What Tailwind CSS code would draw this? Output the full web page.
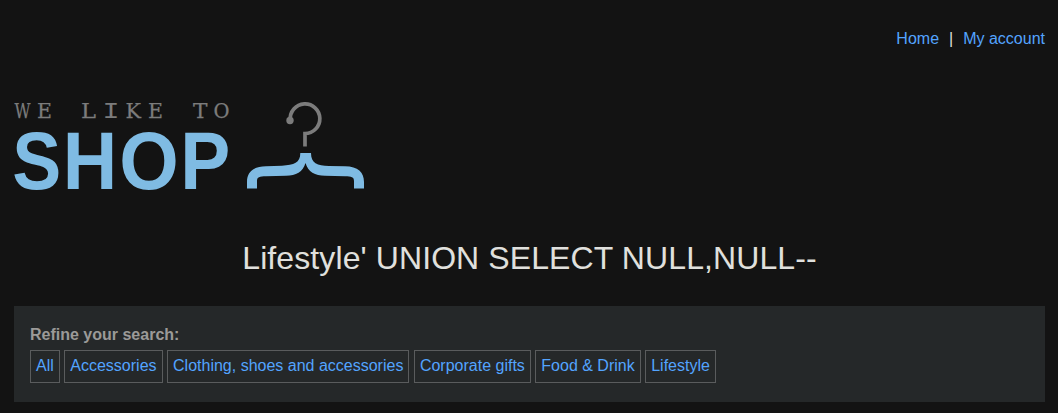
<!DOCTYPE html>
<html lang="en">
<head>
<meta charset="utf-8">
<title>We like to shop</title>
<script src="https://cdn.jsdelivr.net/npm/@tailwindcss/browser@4"></script>
</head>
<body class="h-[413px] overflow-hidden bg-[#131313] px-[14px] font-['Liberation_Sans',Arial,sans-serif] text-base text-[#e0e0dd]">
<header class="pt-[27px]">
  <nav class="mr-[-1px] flex h-6 justify-end gap-[10px] leading-6">
    <a href="#" class="text-[#53a4ff]">Home</a>
    <span>|</span>
    <a href="#" class="text-[#53a4ff]">My account</a>
  </nav>
  <svg class="mt-[43px] block" width="360" height="104" viewBox="14 94 360 104" overflow="visible" role="img" aria-label="We like to shop">
    <g fill="#7c7c7c" stroke="#7c7c7c" stroke-width=".25" font-family="DejaVu Serif, serif" font-size="20.6">
      <text x="14.600" y="117.5" textLength="16" lengthAdjust="spacingAndGlyphs">W</text>
      <text x="37" y="117.5" textLength="15" lengthAdjust="spacingAndGlyphs">E</text>
      <text x="81" y="117.5" textLength="15" lengthAdjust="spacingAndGlyphs">L</text>
      <text x="102.500" y="117.5" font-family="Liberation Mono, monospace" font-size="22.500" stroke="none" textLength="17" lengthAdjust="spacingAndGlyphs">I</text>
      <text x="125.5" y="117.5" textLength="15.5" lengthAdjust="spacingAndGlyphs">K</text>
      <text x="148" y="117.5" textLength="15" lengthAdjust="spacingAndGlyphs">E</text>
      <text x="193" y="117.5" textLength="14.5" lengthAdjust="spacingAndGlyphs">T</text>
      <text x="213.500" y="117.5" textLength="16" lengthAdjust="spacingAndGlyphs">O</text>
    </g>
    <g fill="#7fbbe3" font-family="Liberation Sans, Arial, sans-serif" font-weight="700" font-size="81.5">
      <text x="12.200" y="189" textLength="49" lengthAdjust="spacingAndGlyphs">S</text>
      <text x="62.8" y="189" textLength="54.5" lengthAdjust="spacingAndGlyphs">H</text>
      <text x="119.300" y="189" textLength="59.500" lengthAdjust="spacingAndGlyphs">O</text>
      <text x="180.200" y="189" textLength="50" lengthAdjust="spacingAndGlyphs">P</text>
    </g>
    <circle cx="290" cy="120.500" r="3.700" fill="#7c7c7c"/>
    <path d="M290.300 120A14.800 14.800 0 1 1 305 133.500V146.500" fill="none" stroke="#7c7c7c" stroke-width="3.700"/>
    <path d="M300.300 153H311C311 163 317 165.700 329 166L345 166.200C358 166.500 364 172 364 182V188.500H354V181C354 177 351.500 176.200 345 176.200L325 175.800C315 175.500 308 172 305.500 163C303 172 296 175.500 286 175.800L266 176.200C259.500 176.200 257 177 257 181V188.500H247V182C247 172 253 166.500 266 166.200L282 165.700C294 165 300.300 163 300.300 153Z" fill="#7fbbe3"/>
  </svg>
</header>
<main>
  <h1 class="mr-[-1px] mt-10 h-10 text-center text-[32px] leading-10 tracking-[0.1px]">Lifestyle' UNION SELECT NULL,NULL--</h1>
  <section class="mr-[-1px] mt-7 h-24 bg-[#252829] px-4 pt-[17px]">
    <p class="h-6 font-bold leading-6 text-[#9b9a98]">Refine your search:</p>
    <div class="mt-[3px] flex gap-[4.5px] whitespace-nowrap leading-[29px] text-[#53a4ff]">
      <a href="#" class="h-[33px] border border-[#5a5c5d] px-[5px]">All</a>
      <a href="#" class="h-[33px] border border-[#5a5c5d] px-[5px]">Accessories</a>
      <a href="#" class="h-[33px] border border-[#5a5c5d] px-[5px]">Clothing, shoes and accessories</a>
      <a href="#" class="h-[33px] border border-[#5a5c5d] px-[5px]">Corporate gifts</a>
      <a href="#" class="h-[33px] border border-[#5a5c5d] px-[5px]">Food &amp; Drink</a>
      <a href="#" class="h-[33px] border border-[#5a5c5d] px-[5px]">Lifestyle</a>
    </div>
  </section>
</main>
</body>
</html>
